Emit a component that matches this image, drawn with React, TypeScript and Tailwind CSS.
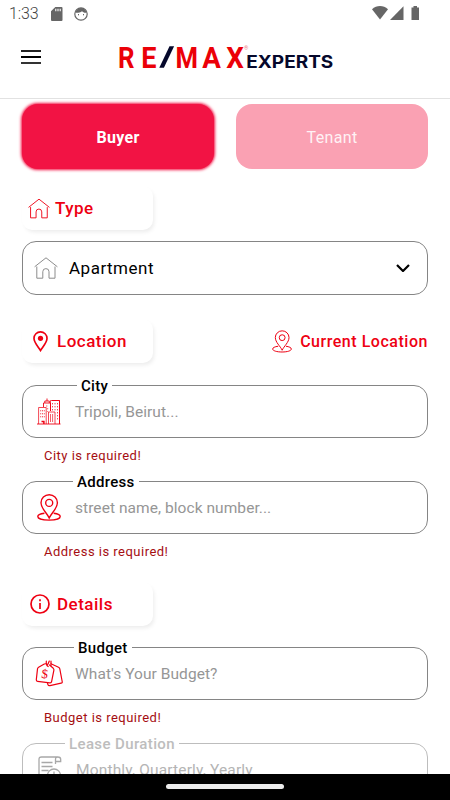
import type { ReactNode } from "react"
import clsx from "clsx"

// ─── Icons ──────────────────────────────────────────────────────────────────
function HouseIcon({ className }: { className: string }) {
  return (
    <svg viewBox="0 0 24 22" fill="none" stroke="currentColor" className={className}>
      <path d="M.6 9.800 12 .8l11.400 9M2.800 9.500v11.700h6v-6.500a3.100 3.100 0 0 1 6.200 0v6.500h6V9.500" />
    </svg>
  )
}

function MapPinIcon({ className, width = 1.2 }: { className: string; width?: number }) {
  return (
    <svg viewBox="0 0 24 27" fill="none" stroke="currentColor" strokeWidth={width} className={className}>
      <path d="M12.200 24C10 19 4 14.500 4 8.700a8.200 8 0 0 1 16.400 0C20.400 14.500 14.400 19 12.200 24Z" />
      <circle cx="12.200" cy="8.900" r="3.500" />
      <path d="M7.400 19.200C3.300 19.700.8 20.900.8 22.500c0 2.100 4.900 3.600 11.300 3.600s11.100-1.500 11.100-3.600c0-1.600-2.500-2.800-6.500-3.300" />
    </svg>
  )
}

function PinIcon() {
  return (
    <svg viewBox="0 0 14 20" fill="none" stroke="currentColor" strokeWidth="1.600" className="w-[15px] h-[21px]">
      <path d="M7 18.600C5 15.300.8 11.200.8 7a6.200 6.200 0 0 1 12.400 0c0 4.200-4.200 8.300-6.200 11.600Z" />
      <circle cx="7" cy="7" r="2.500" fill="currentColor" stroke="none" />
    </svg>
  )
}

function InfoIcon() {
  return (
    <svg viewBox="0 0 20 20" fill="none" stroke="currentColor" strokeWidth="1.700" className="size-5">
      <circle cx="10" cy="10" r="9" />
      <path d="M10 9v6M10 5.200v2" />
    </svg>
  )
}

function CityIcon() {
  return (
    <svg viewBox="0 0 24 27" fill="none" stroke="currentColor" strokeWidth=".9" className="w-6 h-[27px]">
      <path d="M0 26h23.500" />
      <path d="M1.600 26V9.500h7.600V26M13.500 13V2.500h9V26M11.500 26V14h6.500v12" strokeOpacity=".8" />
      <path d="M22.500 2.500V26M15 2.500h7.500" />
      <path d="M6.500 9V5h7v8M7.800 5V3h4.500v2M10 3V.5" />
      <path d="M3.700 12v8M5.500 12v8M7.300 12v8M9 8h3M10.700 10v4" strokeDasharray="1.400 1.600" strokeOpacity=".7" />
      <path d="M15.500 5v8M18 5v8M20.500 5v17" strokeDasharray="1.400 1.600" strokeOpacity=".8" />
      <path d="M13.500 16v8M15.600 16v8" strokeOpacity=".7" />
      <path d="M4.500 23.500h2.400V26" strokeWidth="1.500" />
    </svg>
  )
}

function BudgetIcon() {
  return (
    <svg viewBox="0 0 28 28" fill="none" stroke="currentColor" strokeWidth="1.200" strokeLinecap="round" strokeLinejoin="round" className="size-7">
      <path d="M11.300 3.800c-.9-.2-1.300-.1-2 .3L3.600 7.300c-.8.500-1 .8-1.100 1.600L1.300 19.700c-.1 1.100.3 1.500 1.300 1.600l12.300 1.500c1 .1 1.500-.2 1.700-1.200l2.300-11.400c.2-.9 0-1.300-.6-1.900L14.500 5" />
      <path d="m16 3.800 7.500 3.400c.8.400 1.100.8 1.300 1.600l2.400 12.700c.2 1-.1 1.500-1.100 1.700l-11.100 2.400c-1.200.3-1.800-.2-2.100-1.100l-.4-1.400" />
      <path d="M11.300 1.200c-.3 3 .4 4.500 1.900 5.300M14.300 1c-.6 1.800-1.400 3.200-2.300 4.500M16 1.200V5.500" />
      <text x="6.500" y="18.300" fontSize="13" fill="currentColor" stroke="none" transform="rotate(7 10 14)" className="font-['Liberation_Serif',serif]">$</text>
    </svg>
  )
}

function LeaseIcon() {
  return (
    <svg viewBox="0 0 26 28" fill="none" stroke="currentColor" strokeWidth="1.300" className="w-[26px] h-7">
      <path d="M2 20V3.500C2 1.800 2.900 1 4.500 1h17M18.500 8V3.500C18.500 1.800 19.300 1 21 1s2.700.8 2.700 2.500V5.500h-5" />
      <path d="M4.500 6.500h11M4.500 10.500h11M4.500 14.500h7M.8 20h10" />
      <circle cx="17" cy="19.500" r="6.500" />
      <path d="M17 15.500v4h3" />
    </svg>
  )
}

// ─── Top of the screen ──────────────────────────────────────────────────────
function StatusBar() {
  return (
    <div className="h-7 flex items-center pl-[9px] pr-[30px] text-[#666]">
      <span className="text-[16px] leading-none text-[#444] w-[42px] font-light tracking-[-0.1px]">1:33</span>
      <svg viewBox="0 0 12 14" className="w-3 h-[14px] -mt-px" fill="currentColor">
        <path d="M4.300 0H10.500Q11.500 0 11.500 1v12q0 1-1 1H1q-1 0-1-1V4.200Z" />
        <path d="M4.800 1.700v2.500M7 1.700v2.500M9.200 1.700v2.500" stroke="#fff" strokeWidth="1.100" />
      </svg>
      <svg viewBox="0 0 14 14" className="size-[14px] ml-[11px] -mt-px" fill="none" stroke="currentColor">
        <circle cx="7" cy="7" r="6.200" strokeWidth="1.200" />
        <path d="M1.300 5.800C2 2.500 4.500 1 7 1s5 1.500 5.700 4.800C10 6 9 5.300 8 4.300 6.500 5.500 4 6 1.300 5.800Z" fill="currentColor" stroke="none" />
        <path d="M4.500 7v1.300M9.500 7v1.300" />
      </svg>
      <svg viewBox="0 0 48 14" className="w-12 h-[14px] ml-auto -mt-[2px]" fill="currentColor">
        <path d="M0 3.300C4.700-1 11.300-1 16 3.300L8 13.500Z" />
        <path d="M18 14 31.500.3V14Z" />
        <path d="M39.500 1.500h2V0h3.500v1.500h2V14h-7.500Z" />
      </svg>
    </div>
  )
}

const LOGO_LETTERS = [
  { ch: "R", x: 0, w: 16.5 },
  { ch: "E", x: 23.3, w: 15.2 },
  { ch: "M", x: 57.5, w: 22.5 },
  { ch: "A", x: 84.3, w: 18.6 },
  { ch: "X", x: 108.3, w: 17.6 },
]

function Logo() {
  return (
    <svg viewBox="0 -8 224 42" className="w-[224px] h-[42px] overflow-visible">
      <g fill="#eb0008" fontSize="30" className="font-[Roboto,sans-serif] font-bold">
        {LOGO_LETTERS.map(l => (
          <text key={l.ch} x={l.x} y="23.800" textLength={l.w} lengthAdjust="spacingAndGlyphs">{l.ch}</text>
        ))}
      </g>
      <path d="M41.300 23.800 51.500 2.300h4.600L45.900 23.800Z" fill="#05082b" />
      <text x="126" y="5.500" fontSize="5.500" fill="#ee7f84" className="font-[Roboto,sans-serif]">®</text>
      <text x="128.300" y="23.700" fontSize="17" fill="#05082b" textLength="87" lengthAdjust="spacingAndGlyphs" className="font-[Inter,sans-serif] font-bold">EXPERTS</text>
    </svg>
  )
}

function Header() {
  return (
    <header className="h-[71px] flex items-start border-b border-[#e2e2e2] pl-[21px]">
      <button className="mt-[22px] w-[20px] h-[14px] flex flex-col justify-between">
        <span className="h-[2px] w-full bg-[#222]" />
        <span className="h-[2px] w-full bg-black" />
        <span className="h-[2px] w-full bg-[#333]" />
      </button>
      <div className="ml-[77px] mt-2"><Logo /></div>
    </header>
  )
}

// ─── Form pieces ────────────────────────────────────────────────────────────
function SectionChip({ icon, title, className }: { icon: ReactNode; title: string; className: string }) {
  return (
    <div className={clsx("w-[131px] h-11 rounded-[10px] bg-white flex items-center text-[17px] text-[#ee0012] font-medium shadow-[2px_3px_4px_-1px_rgba(0,0,0,0.08)]", className)}>
      {icon}
      <span className="pt-px">{title}</span>
    </div>
  )
}

function Field({ label, labelClass, placeholder, error, icon, muted }: {
  label: string; labelClass: string; placeholder: string; error?: string; icon: ReactNode; muted?: boolean
}) {
  return (
    <div>
      <div className={clsx("relative h-[53px] border rounded-[14px] flex items-center", muted ? "border-[#bdbdbd]" : "border-[#858585]")}>
        <span className={clsx("absolute -top-[9px] bg-white px-1 text-[15px] leading-[18px] font-medium", muted ? "text-[#bdbdbd]" : "text-black", labelClass)}>{label}</span>
        <span className={clsx("w-[51px] flex justify-center", muted ? "text-[#a8a8a8] pl-[3px]" : "text-[#ee0012]")}>{icon}</span>
        <span className={clsx("text-[15.5px] pt-[3px]", muted ? "text-[#b4b4b4] tracking-[0.16px] ml-[2px]" : "text-[#969696] tracking-[0.06px] ml-px")}>{placeholder}</span>
      </div>
      {error && <p className="ml-[22px] mt-2 h-5 leading-5 text-[13px] text-[#a50e12] tracking-[0.48px]">{error}</p>}
    </div>
  )
}

export default function App() {
  return (
    <div className="w-[450px] h-[800px] flex flex-col overflow-hidden bg-white font-[Roboto,sans-serif]">
      <StatusBar />
      <Header />
      <main className="flex-1 min-h-0 overflow-hidden px-[22px]">
        <div className="mt-[5px] flex gap-[22px] h-[65px] text-[16px] text-white">
          <button className="flex-1 rounded-[16px] bg-[#f21344] font-bold tracking-[0.3px] pt-[2px] shadow-[0_0_3px_1px_#f21344]">Buyer</button>
          <button className="flex-1 rounded-[16px] bg-[#faa1b3] tracking-[0.35px] pt-[2px] text-[#fff2f5]">Tenant</button>
        </div>

        <SectionChip title="Type" className="mt-[17px] pl-[6px] gap-[5px] tracking-[0.5px]" icon={<HouseIcon className="w-[22px] h-[21px]" />} />
        <div className="mt-[11px] h-[54px] border border-[#858585] rounded-[14px] flex items-center pl-[11px] pr-[17px]">
          <HouseIcon className="w-6 h-[22px] text-[#8c8c8c]" />
          <span className="ml-[11px] pt-[2px] text-[17px] text-black tracking-[0.5px]">Apartment</span>
          <svg viewBox="0 0 14 8" className="w-[14px] h-2 ml-auto" fill="none" stroke="#000" strokeWidth="2.200">
            <path d="m1 1 6 6 6-6" />
          </svg>
        </div>

        <div className="mt-6 flex items-center justify-between">
          <SectionChip title="Location" className="pl-[11px] gap-[9px] tracking-[0.5px]" icon={<PinIcon />} />
          <div className="flex items-center gap-[8px] text-[16px] font-medium text-[#ee0012] tracking-[0.53px]">
            <MapPinIcon className="w-5 h-[23px]" />
            <span className="pt-[2px]">Current Location</span>
          </div>
        </div>
        <div className="mt-[22px] flex flex-col gap-[15px]">
          <Field label="City" labelClass="left-[54px] tracking-[0.3px]" placeholder="Tripoli, Beirut..." error="City is required!" icon={<CityIcon />} />
          <Field label="Address" labelClass="left-[50px] tracking-[0.3px]" placeholder="street name, block number..." error="Address is required!" icon={<MapPinIcon className="w-6 h-[27px]" width={1.4} />} />
        </div>

        <SectionChip title="Details" className="mt-[20px] pl-[8px] gap-[7px] tracking-[0.5px]" icon={<InfoIcon />} />
        <div className="mt-[21px] flex flex-col gap-[15px]">
          <Field label="Budget" labelClass="left-[51px] tracking-[0.3px]" placeholder="What's Your Budget?" error="Budget is required!" icon={<BudgetIcon />} />
          <Field muted label="Lease Duration" labelClass="left-[42px] tracking-[0.38px]" placeholder="Monthly, Quarterly, Yearly" icon={<LeaseIcon />} />
        </div>
      </main>
      <div className="h-[26px] shrink-0 bg-black flex justify-center pt-[10px]">
        <div className="w-[118px] h-[5px] rounded-full bg-[#ececec]" />
      </div>
    </div>
  )
}
